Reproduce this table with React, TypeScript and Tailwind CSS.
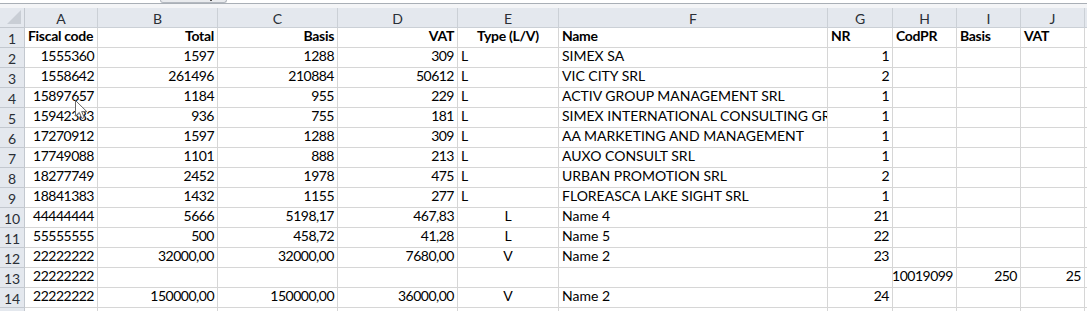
import React from "react";

type Align = "l" | "r" | "c";
type Cell = [string, Align] | null;

const L = (s: string): Cell => [s, "l"];
const R = (s: string): Cell => [s, "r"];
const C = (s: string): Cell => [s, "c"];
const E: Cell = null;

const letters = ["A", "B", "C", "D", "E", "F", "G", "H", "I", "J"];

const rows: { cells: Cell[]; bold?: boolean }[] = [
  { bold: true, cells: [L("Fiscal code"), R("Total"), R("Basis"), R("VAT"), C("Type (L/V)"), L("Name"), L("NR"), L("CodPR"), L("Basis"), L("VAT")] },
  { cells: [R("1555360"), R("1597"), R("1288"), R("309"), L("L"), L("SIMEX SA"), R("1"), E, E, E] },
  { cells: [R("1558642"), R("261496"), R("210884"), R("50612"), L("L"), L("VIC CITY SRL"), R("2"), E, E, E] },
  { cells: [R("15897657"), R("1184"), R("955"), R("229"), L("L"), L("ACTIV GROUP MANAGEMENT SRL"), R("1"), E, E, E] },
  { cells: [R("15942383"), R("936"), R("755"), R("181"), L("L"), L("SIMEX INTERNATIONAL CONSULTING GROUP"), R("1"), E, E, E] },
  { cells: [R("17270912"), R("1597"), R("1288"), R("309"), L("L"), L("AA MARKETING AND MANAGEMENT"), R("1"), E, E, E] },
  { cells: [R("17749088"), R("1101"), R("888"), R("213"), L("L"), L("AUXO CONSULT SRL"), R("1"), E, E, E] },
  { cells: [R("18277749"), R("2452"), R("1978"), R("475"), L("L"), L("URBAN PROMOTION SRL"), R("2"), E, E, E] },
  { cells: [R("18841383"), R("1432"), R("1155"), R("277"), L("L"), L("FLOREASCA LAKE SIGHT SRL"), R("1"), E, E, E] },
  { cells: [R("44444444"), R("5666"), R("5198,17"), R("467,83"), C("L"), L("Name 4"), R("21"), E, E, E] },
  { cells: [R("55555555"), R("500"), R("458,72"), R("41,28"), C("L"), L("Name 5"), R("22"), E, E, E] },
  { cells: [R("22222222"), R("32000,00"), R("32000,00"), R("7680,00"), C("V"), L("Name 2"), R("23"), E, E, E] },
  { cells: [R("22222222"), E, E, E, E, E, E, R("10019099"), R("250"), R("25")] },
  { cells: [R("22222222"), R("150000,00"), R("150000,00"), R("36000,00"), C("V"), L("Name 2"), R("24"), E, E, E] },
];

const justify: Record<Align, string> = {
  l: "justify-start",
  r: "justify-end",
  c: "justify-center",
};

const Cursor = () => (
  <svg className="absolute left-[75px] top-[100px]" width="13" height="20" viewBox="0 0 13 20">
    <path
      d="M0.5 0.5 L0.5 16 L4.3 12.4 L6.9 18.5 L9.2 17.5 L6.7 11.6 L11.8 11.6 Z"
      fill="#fff"
      stroke="#6b6b6b"
      strokeWidth="1"
      strokeLinejoin="round"
    />
  </svg>
);

export default function App() {
  return (
    <div className="relative h-[311px] w-[1087px] overflow-hidden bg-white font-['Lato','Liberation_Sans',sans-serif] text-[14px] text-black">
      {/* formula bar edge */}
      <div className="h-[3px] bg-white">
        <div className="ml-[160px] flex h-[3px] w-[67px] justify-end rounded-b-[3px] border-x border-b border-[#b4b9c0] bg-[#e9ebee] pr-[14px]">
          <div className="h-[1px] w-[2px] bg-[#555]" />
        </div>
      </div>
      <div className="h-[1px] bg-[#a9afb6]" />
      <div className="h-[4px] bg-[#f4f5f7]" />

      <div className="grid grid-cols-[25px_73px_120px_120px_120px_101px_269px_65px_64px_64px_64px_1fr]">
        {/* column headers */}
        <div className="relative h-[20px] border-r border-b border-[#c3c8cf] bg-[#e4e8ee]">
          <svg className="absolute bottom-[3px] right-[3px]" width="14" height="14" viewBox="0 0 14 14">
            <path d="M14 0 L14 14 L0 14 Z" fill="#c9ced5" />
          </svg>
        </div>
        {letters.map((l) => (
          <div
            key={l}
            className="flex h-[20px] items-center justify-center border-r border-b border-[#cbd0d6] bg-[#e4e8ee] pt-[1px] text-[#2a2f36]"
          >
            {l}
          </div>
        ))}
        <div className="h-[20px] border-b border-[#cbd0d6] bg-[#e4e8ee]" />

        {rows.map((row, i) => (
          <React.Fragment key={i}>
            <div className="flex h-[20px] items-center justify-center border-r border-b border-[#c3c8cf] bg-[#e4e8ee] pt-[1px] text-[#2a2f36]">
              {i + 1}
            </div>
            {row.cells.map((c, j) => (
              <div
                key={j}
                className={`flex h-[20px] items-end overflow-hidden whitespace-nowrap border-r border-b border-[#d6d6d6] pb-[1px] ${
                  c ? justify[c[1]] : ""
                } ${
                  row.bold
                    ? "px-[3px] font-bold tracking-[-0.3px]"
                    : c && c[1] === "r"
                    ? "pl-[2px] pr-[3px] tracking-[-0.5px]"
                    : "px-[3px]"
                }`}
              >
                {c ? c[0] : ""}
              </div>
            ))}
            <div className="h-[20px] border-b border-[#d6d6d6]" />
          </React.Fragment>
        ))}

        {/* partly visible row 15 */}
        <div className="h-[20px] border-r border-[#c3c8cf] bg-[#e4e8ee]" />
        {letters.map((l) => (
          <div key={l} className="h-[20px] border-r border-[#d6d6d6]" />
        ))}
        <div className="h-[20px]" />
      </div>

      <Cursor />
    </div>
  );
}
